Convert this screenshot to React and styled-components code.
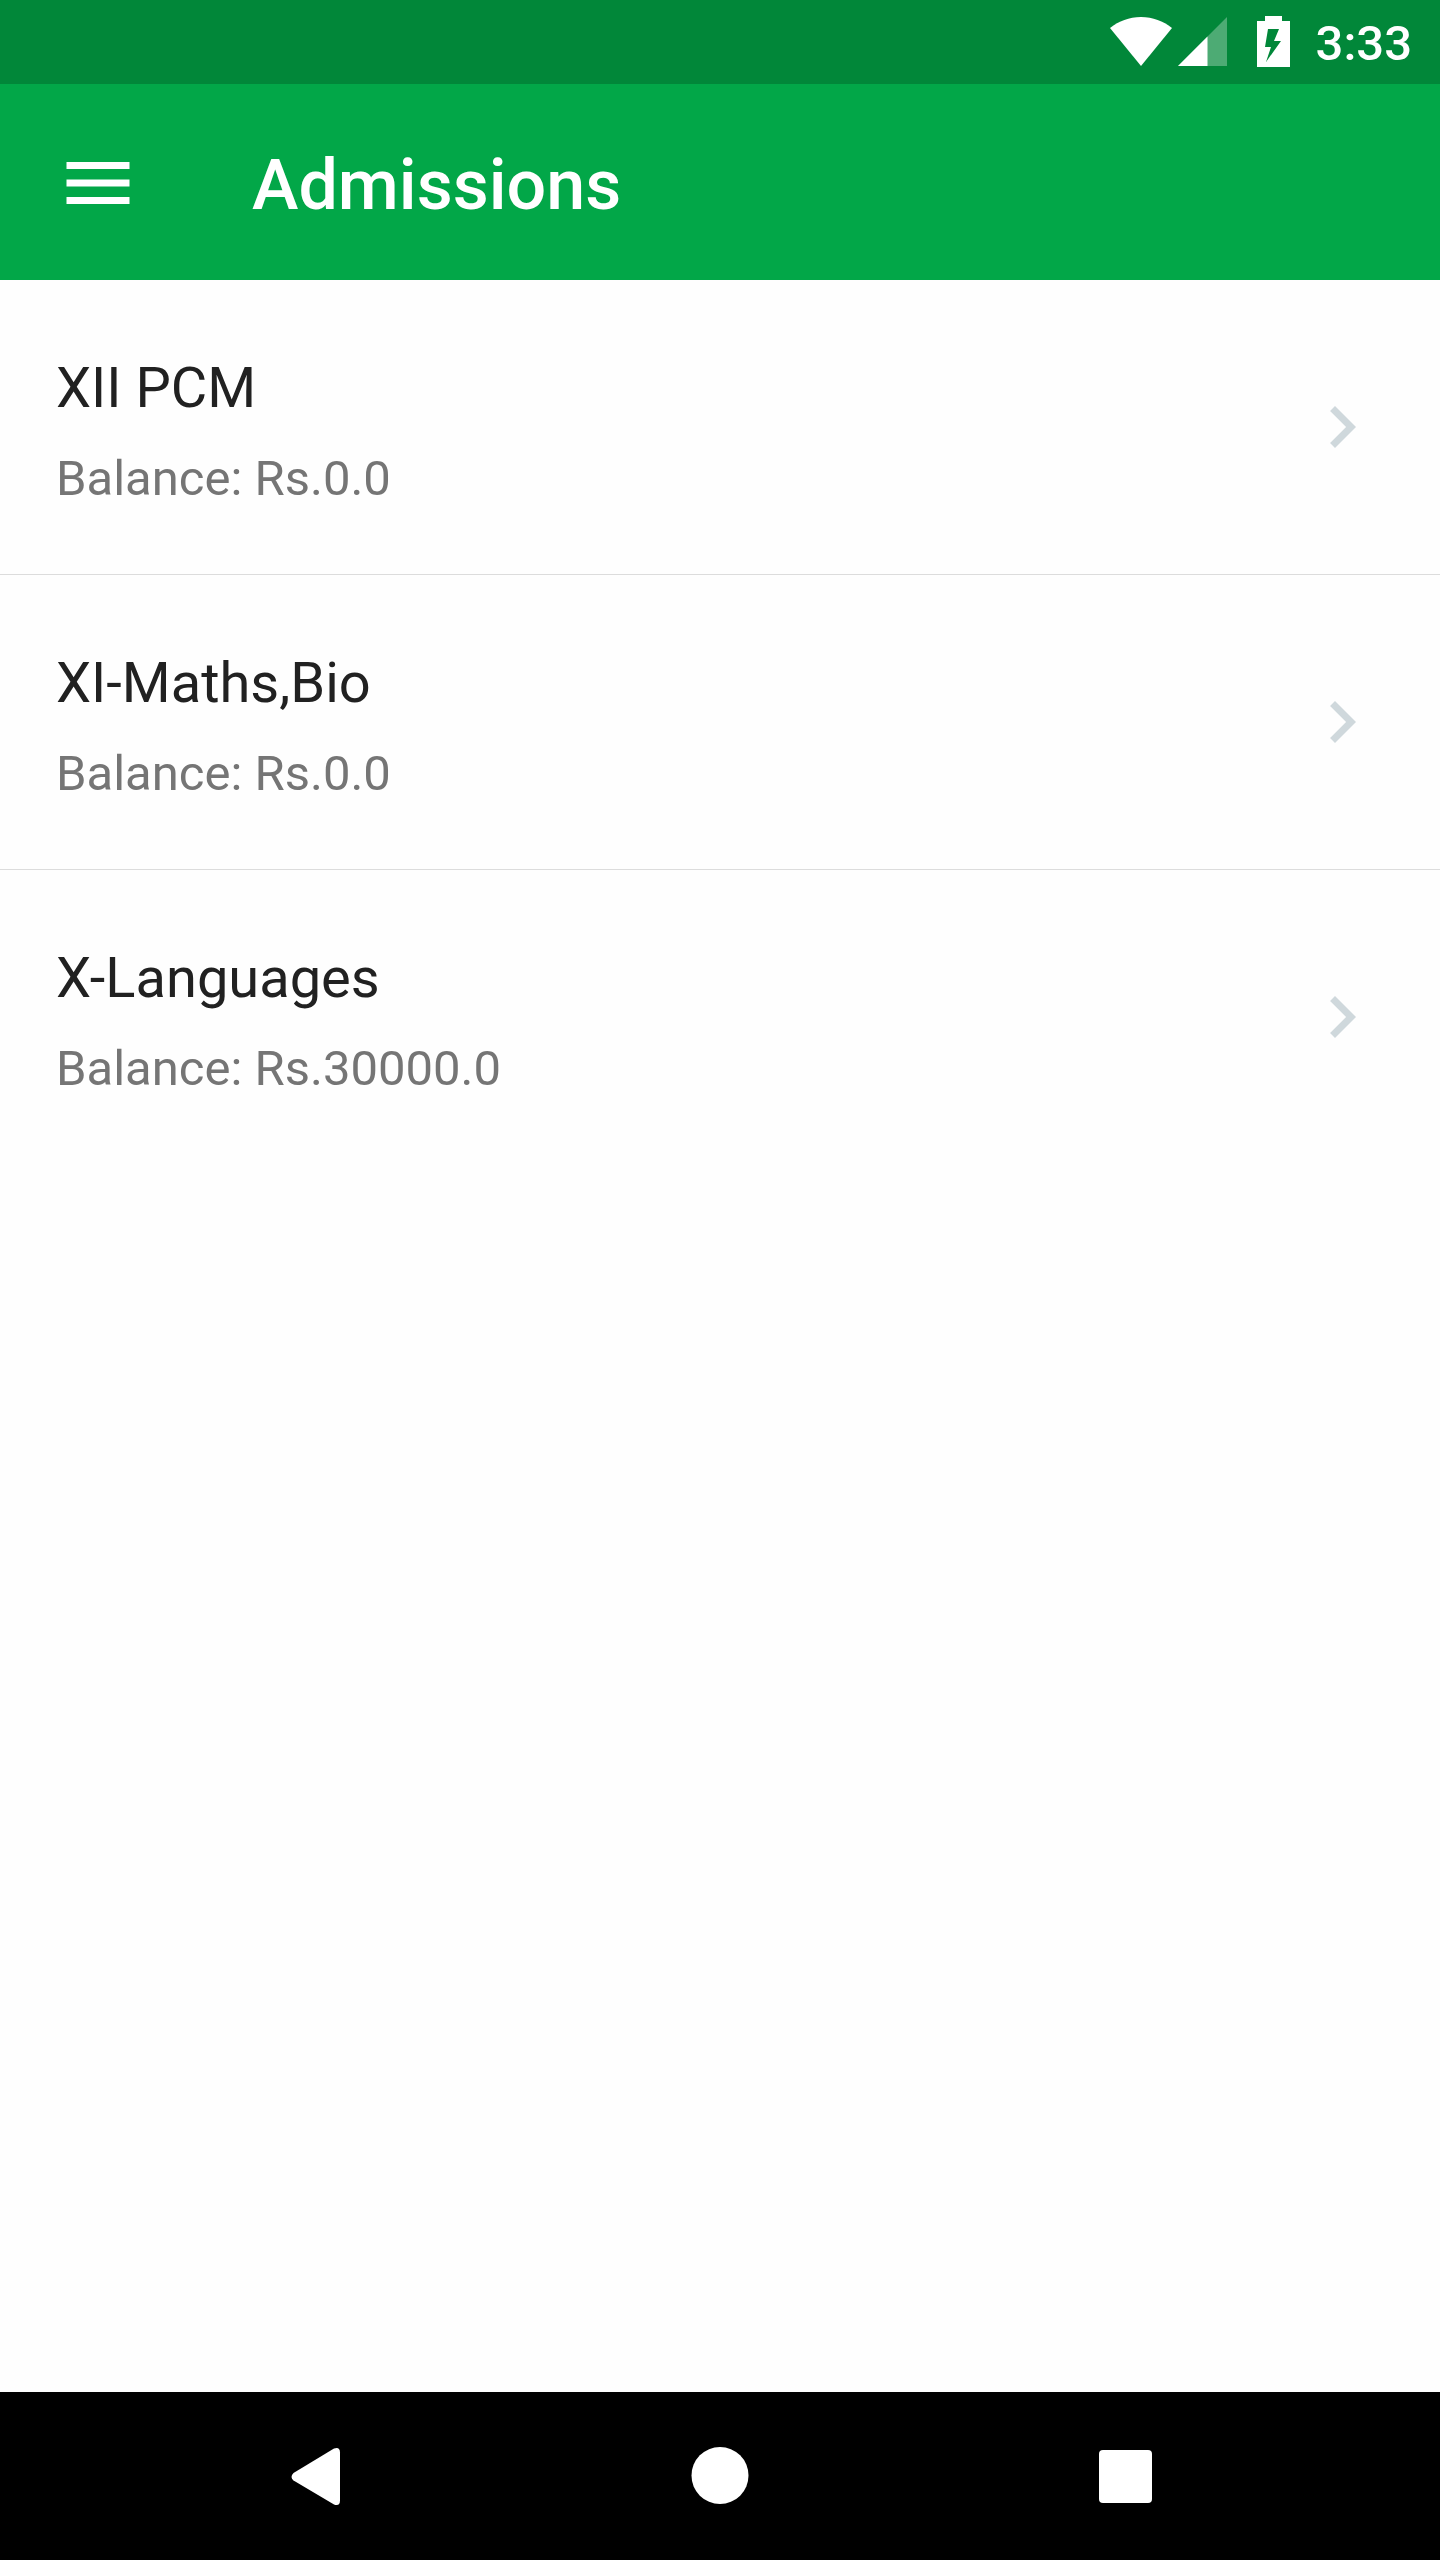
import React from 'react';
import styled, { createGlobalStyle } from 'styled-components';

const GlobalStyle = createGlobalStyle`
  * {
    box-sizing: border-box;
  }

  body {
    margin: 0;
    background: #fefefe;
    font-family: Roboto, 'Noto Sans', sans-serif;
  }
`;

const Page = styled.div`
  display: flex;
  flex-direction: column;
  min-height: 100vh;
`;

const StatusBar = styled.div`
  display: flex;
  align-items: center;
  justify-content: flex-end;
  height: 84px;
  padding-right: 28px;
  background: #018739;
  color: #ffffff;
`;

const StatusIcons = styled.svg`
  display: block;
  width: 184px;
  height: 84px;
  margin-right: 26px;
  fill: #ffffff;
`;

const Clock = styled.time`
  padding-top: 4px;
  font-size: 49px;
  font-weight: 500;
  line-height: 56px;
`;

const AppBar = styled.header`
  display: flex;
  align-items: center;
  height: 196px;
  padding: 2px 56px 0;
  gap: 112px;
  background: #02a748;
  color: #ffffff;
`;

const IconButton = styled.button`
  display: flex;
  align-items: center;
  justify-content: center;
  padding: 0;
  border: none;
  background: none;
  color: #ffffff;
  cursor: pointer;
`;

const Icon = styled.svg`
  display: block;
  flex: none;
  width: 84px;
  height: 84px;
  fill: currentColor;
`;

const Title = styled.h1`
  margin: 0;
  padding-top: 4px;
  font-size: 70px;
  font-weight: 500;
  line-height: 84px;
`;

const List = styled.ul`
  flex: 1;
  margin: 0;
  padding: 0;
  list-style: none;
`;

const Item = styled.li`
  & + & {
    border-top: 1px solid #dcdcdc;
  }
`;

const ItemLink = styled.a`
  display: flex;
  align-items: center;
  justify-content: space-between;
  padding: 70px 56px;
  color: #cfd8dc;
  text-decoration: none;
`;

const ItemTitle = styled.div`
  margin-bottom: 28px;
  color: #212121;
  font-size: 56px;
  line-height: 76px;
`;

const ItemBalance = styled.div`
  color: #757575;
  font-size: 49px;
  line-height: 50px;
`;

const NavBar = styled.nav`
  display: grid;
  grid-template-columns: repeat(3, 1fr);
  height: 168px;
  padding: 0 112px;
  background: #000000;
`;

const admissions = [
  { name: 'XII PCM', balance: '0.0' },
  { name: 'XI-Maths,Bio', balance: '0.0' },
  { name: 'X-Languages', balance: '30000.0' },
];

const App = () => {
  return (
    <>
      <GlobalStyle />
      <Page>
        <StatusBar>
          <StatusIcons viewBox="0 0 184 84" aria-hidden="true">
            {/* wifi */}
            <path d="M4 28C13 21 23 17 35 17s22 4 31 11L35 66z" />
            {/* signal */}
            <path d="M121 17v49H72z" fillOpacity="0.3" />
            <path d="M101.500 36.500V66H72z" />
            {/* charging battery */}
            <path
              fillRule="evenodd"
              d="M159 16h17v5h8v46h-33V21h8zM162 29l-3 18h6l-5 15 15-21h-7l5-12z"
            />
          </StatusIcons>
          <Clock>3:33</Clock>
        </StatusBar>

        <AppBar>
          <IconButton aria-label="Open menu">
            <Icon viewBox="0 0 24 24">
              <path d="M3 18h18v-2H3v2zm0-5h18v-2H3v2zm0-7v2h18V6H3z" />
            </Icon>
          </IconButton>
          <Title>Admissions</Title>
        </AppBar>

        <List>
          {admissions.map((item) => (
            <Item key={item.name}>
              <ItemLink href="#">
                <div>
                  <ItemTitle>{item.name}</ItemTitle>
                  <ItemBalance>Balance: Rs.{item.balance}</ItemBalance>
                </div>
                <Icon viewBox="0 0 24 24" aria-hidden="true">
                  <path d="M10 6L8.590 7.410 13.170 12l-4.580 4.590L10 18l6-6z" />
                </Icon>
              </ItemLink>
            </Item>
          ))}
        </List>

        <NavBar>
          <IconButton aria-label="Back">
            <Icon viewBox="0 0 84 84">
              <path d="M20.500 39L61 14.500Q67 12.500 67 18.500V66.500Q67 72.500 61 70.500L20.500 46.500Q16.500 43 20.500 39z" />
            </Icon>
          </IconButton>
          <IconButton aria-label="Home">
            <Icon viewBox="0 0 84 84">
              <circle cx="42" cy="41.500" r="28.500" />
            </Icon>
          </IconButton>
          <IconButton aria-label="Recent apps">
            <Icon viewBox="0 0 84 84">
              <rect x="16" y="16" width="53" height="53" rx="4" />
            </Icon>
          </IconButton>
        </NavBar>
      </Page>
    </>
  );
};

export default App;
